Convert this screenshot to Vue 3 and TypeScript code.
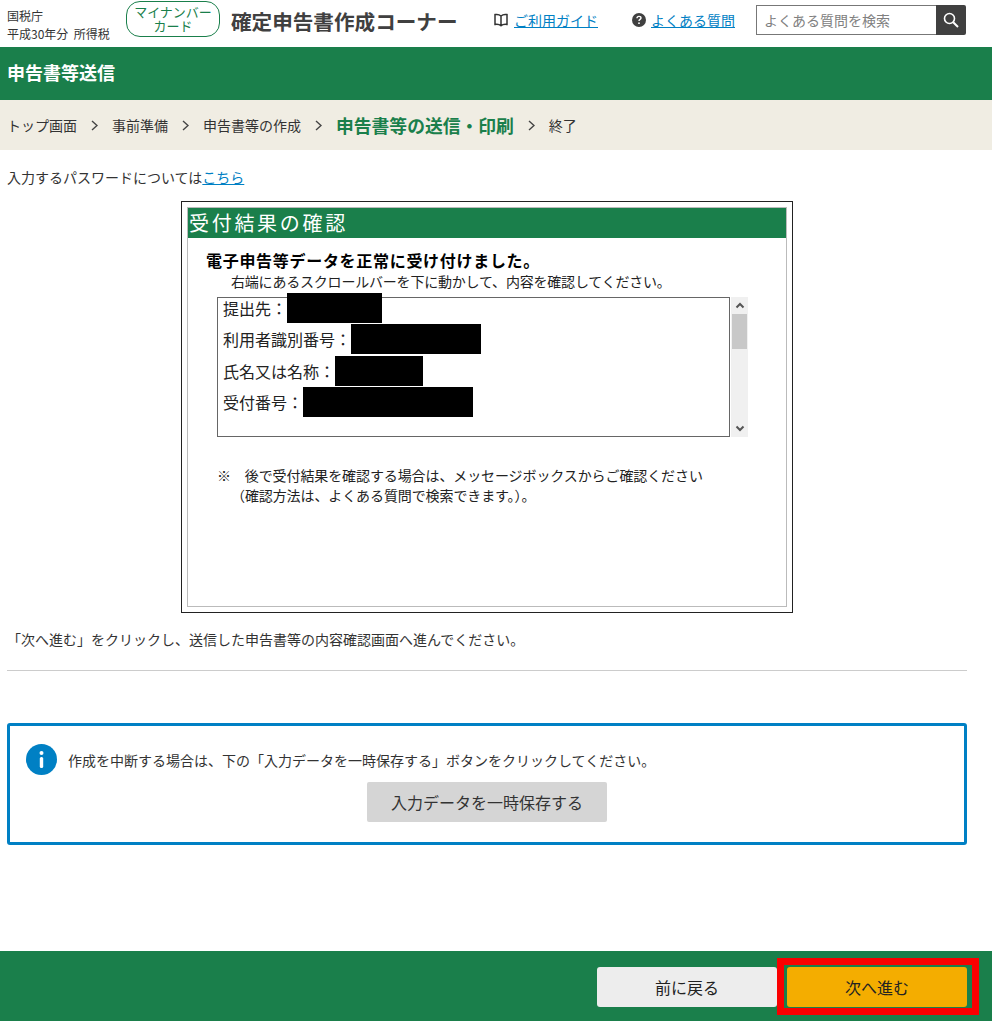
<template>
  <div class="page">
    <header class="top">
      <div class="agency">
        <div>国税庁</div>
        <div>平成30年分&nbsp;&nbsp;所得税</div>
      </div>
      <div class="badge">マイナンバー<br />カード</div>
      <div class="site-title">確定申告書作成コーナー</div>
      <div class="nav-item guide">
        <svg width="16" height="14" viewBox="0 0 16 14" fill="none" stroke="#333" stroke-width="1.5">
          <path d="M8 3C6.5 1.6 4 1.2 2 1.6V11.4C4 11 6.5 11.4 8 12.8C9.5 11.4 12 11 14 11.4V1.6C12 1.2 9.5 1.6 8 3V12.8" />
        </svg>
        <a href="#">ご利用ガイド</a>
      </div>
      <div class="nav-item faq">
        <svg width="14" height="14" viewBox="0 0 14 14">
          <circle cx="7" cy="7" r="7" fill="#404040" />
          <path d="M5 5.3C5 4 6 3.4 7 3.4C8.1 3.4 9 4.1 9 5.1C9 6.4 7 6.500 7 8" fill="none" stroke="#fff" stroke-width="1.4" />
          <circle cx="7" cy="10.200" r="0.9" fill="#fff" />
        </svg>
        <a href="#">よくある質問</a>
      </div>
      <div class="search">
        <input type="text" placeholder="よくある質問を検索" />
        <button type="button" aria-label="検索">
          <svg width="16" height="16" viewBox="0 0 16 16" fill="none" stroke="#fff" stroke-width="1.6">
            <circle cx="6.500" cy="6.500" r="5" />
            <path d="M10.200 10.200L15 15" stroke-width="2" />
          </svg>
        </button>
      </div>
    </header>

    <div class="page-title">申告書等送信</div>

    <nav class="steps">
      <template v-for="(step, index) in steps" :key="step.label">
        <span :class="['step', { current: step.current }]">{{ step.label }}</span>
        <svg v-if="index < steps.length - 1" class="chevron" width="7" height="11" viewBox="0 0 7 11" fill="none" stroke="#444" stroke-width="1.4">
          <path d="M1 1L6 5.500L1 10" />
        </svg>
      </template>
    </nav>

    <main class="content">
      <p class="password-note">入力するパスワードについては<a href="#">こちら</a></p>

      <div class="frame">
        <div class="frame-inner">
          <h2 class="frame-title">受付結果の確認</h2>
          <div class="frame-body">
            <p class="received">電子申告等データを正常に受け付けました。</p>
            <p class="scroll-hint">右端にあるスクロールバーを下に動かして、内容を確認してください。</p>
            <div class="result">
              <div class="result-list">
                <div v-for="row in rows" :key="row.label" class="result-row">
                  <span>{{ row.label }}：</span>
                  <span class="redacted" :style="{ width: row.width + 'px' }"></span>
                </div>
              </div>
              <div class="scrollbar">
                <svg width="10" height="7" viewBox="0 0 10 7" fill="none" stroke="#555" stroke-width="2">
                  <path d="M1.500 5.500L5 2L8.500 5.500" />
                </svg>
                <div class="track"><div class="thumb"></div></div>
                <svg width="10" height="7" viewBox="0 0 10 7" fill="none" stroke="#555" stroke-width="2">
                  <path d="M1.500 1.500L5 5L8.500 1.500" />
                </svg>
              </div>
            </div>
            <p class="caution">※　後で受付結果を確認する場合は、メッセージボックスからご確認ください（確認方法は、よくある質問で検索できます。）。</p>
          </div>
        </div>
      </div>

      <p class="next-note">「次へ進む」をクリックし、送信した申告書等の内容確認画面へ進んでください。</p>
      <hr class="rule" />

      <section class="info">
        <div class="info-line">
          <svg width="31" height="31" viewBox="0 0 31 31">
            <circle cx="15.500" cy="15.500" r="15.500" fill="#0080c4" />
            <circle cx="15.500" cy="9" r="2" fill="#fff" />
            <rect x="13.800" y="13" width="3.400" height="11" rx="1.500" fill="#fff" />
          </svg>
          <span>作成を中断する場合は、下の「入力データを一時保存する」ボタンをクリックしてください。</span>
        </div>
        <button type="button" class="save">入力データを一時保存する</button>
      </section>
    </main>

    <footer class="bottom">
      <button type="button" class="back">前に戻る</button>
      <button type="button" class="next">次へ進む<span class="highlight"></span></button>
    </footer>
  </div>
</template>

<script setup lang="ts">
const steps = [
  { label: 'トップ画面' },
  { label: '事前準備' },
  { label: '申告書等の作成' },
  { label: '申告書等の送信・印刷', current: true },
  { label: '終了' },
];

const rows = [
  { label: '提出先', width: 95 },
  { label: '利用者識別番号', width: 130 },
  { label: '氏名又は名称', width: 88 },
  { label: '受付番号', width: 170 },
];
</script>

<style>
html,
body {
  margin: 0;
  background: #fff;
}
</style>

<style scoped>
.page {
  width: 992px;
  height: 1021px;
  display: flex;
  flex-direction: column;
  overflow: hidden;
  font-family: "Noto Sans CJK JP", "Noto Sans", sans-serif;
  font-size: 14px;
  color: #333;
}

p {
  margin: 0;
}

a {
  color: #0080c4;
}

.top {
  height: 47px;
  display: flex;
  align-items: center;
  padding-left: 7px;
  box-sizing: border-box;
}

.agency {
  width: 119px;
  font-size: 12px;
  line-height: 18px;
  padding-top: 3px;
  white-space: nowrap;
}

.badge {
  width: 94px;
  height: 36px;
  margin-bottom: 9px;
  box-sizing: border-box;
  border: 1px solid #1a7f4b;
  border-radius: 14px;
  color: #1a7f4b;
  font-size: 13px;
  line-height: 14px;
  text-align: center;
  padding-top: 3px;
}

.site-title {
  margin-left: 11px;
  width: 262px;
  margin-bottom: 6px;
  font-size: 20.600px;
  font-weight: 700;
  color: #404040;
  white-space: nowrap;
}

.nav-item {
  display: flex;
  align-items: center;
  gap: 5px;
  margin-bottom: 7px;
  white-space: nowrap;
}

.guide {
  width: 139px;
}

.faq {
  width: 124px;
}

.search {
  display: flex;
  width: 210px;
  height: 30px;
  margin-bottom: 7px;
}

.search input {
  width: 180px;
  box-sizing: border-box;
  border: 1px solid #777;
  border-right: none;
  padding: 0 7px;
  font: inherit;
  outline: none;
}

.search input::placeholder {
  color: #808080;
  opacity: 1;
}

.search button {
  width: 30px;
  border: none;
  padding: 0;
  background: #404040;
  border-radius: 0 2px 2px 0;
  display: flex;
  align-items: center;
  justify-content: center;
}

.page-title {
  height: 53px;
  background: #1a7f4b;
  color: #fff;
  font-size: 18px;
  font-weight: 700;
  line-height: 50px;
  padding-left: 7px;
}

.steps {
  height: 50px;
  background: #f0ede3;
  display: flex;
  align-items: center;
  padding-left: 7px;
  gap: 14px;
}

.step {
  white-space: nowrap;
}

.step.current {
  font-size: 17.800px;
  font-weight: 700;
  color: #1a7f4b;
}

.content {
  flex: 1;
  padding: 0 25px 0 7px;
}

.password-note {
  margin-top: 17px;
  line-height: 20px;
}

.frame {
  width: 612px;
  height: 412px;
  box-sizing: border-box;
  margin: 14px 0 0 174px;
  border: 1px solid #222;
  padding: 5px;
}

.frame-inner {
  height: 100%;
  box-sizing: border-box;
  border: 1px solid #bbb;
}

.frame-title {
  margin: 0;
  height: 30px;
  background: #1a7f4b;
  color: #fff;
  font-size: 20px;
  font-weight: 400;
  letter-spacing: 2.700px;
  line-height: 30px;
  padding-left: 1px;
}

.frame-body {
  padding: 0 0 0 29px;
}

.received {
  margin: 11px 0 0 -11px;
  font-size: 16px;
  font-weight: 700;
  letter-spacing: 0.700px;
  line-height: 22px;
  color: #000;
  white-space: nowrap;
}

.scroll-hint {
  margin-left: 14px;
  line-height: 20px;
  white-space: nowrap;
  letter-spacing: -0.200px;
  color: #222;
}

.result {
  display: flex;
  margin-top: 6px;
  height: 140px;
}

.result-list {
  width: 513px;
  box-sizing: border-box;
  border: 1px solid #666;
  padding-left: 5px;
}

.result-row {
  display: flex;
  align-items: center;
  height: 31.500px;
  font-size: 16px;
  color: #222;
}

.result-row:first-child {
  margin-top: -6px;
}

.redacted {
  height: 30px;
  background: #000;
}

.scrollbar {
  width: 17px;
  margin-left: 1px;
  background: #f0f0f0;
  display: flex;
  flex-direction: column;
  align-items: center;
  padding-top: 5px;
  padding-bottom: 5px;
  box-sizing: border-box;
}

.track {
  flex: 1;
  align-self: stretch;
  padding-top: 5px;
}

.thumb {
  height: 35px;
  margin: 0 1px;
  background: #c8c8c8;
}

.caution {
  width: 490px;
  margin-top: 28px;
  padding-left: 14px;
  text-indent: -14px;
  line-height: 20px;
  letter-spacing: -0.100px;
  color: #222;
}

.next-note {
  margin-top: 16px;
  line-height: 20px;
}

.rule {
  margin: 21px 0 0;
  border: none;
  border-top: 1px solid #ccc;
}

.info {
  margin-top: 52px;
  height: 122px;
  box-sizing: border-box;
  border: 3px solid #0080c4;
  border-radius: 3px;
  padding: 18px 16px 0;
  display: flex;
  flex-direction: column;
}

.info-line {
  display: flex;
  align-items: center;
  gap: 11px;
}

.save {
  align-self: center;
  width: 240px;
  height: 40px;
  margin-top: 7px;
  border: none;
  border-radius: 2px;
  background: #d5d5d5;
  color: #333;
  font: inherit;
  font-size: 16px;
}

.bottom {
  height: 70px;
  flex-shrink: 0;
  background: #1a7f4b;
  box-sizing: border-box;
  padding: 16px 25px 0 0;
  display: flex;
  justify-content: flex-end;
  gap: 10px;
}

.bottom button {
  width: 180px;
  height: 40px;
  border: none;
  border-radius: 3px;
  font: inherit;
  font-size: 16px;
  color: #222;
}

.back {
  background: #ededed;
}

.next {
  position: relative;
  background: #f4ad00;
}

.highlight {
  position: absolute;
  left: -10px;
  top: -9px;
  width: 202px;
  height: 57px;
  box-sizing: border-box;
  border: 7px solid #fa0000;
}
</style>
